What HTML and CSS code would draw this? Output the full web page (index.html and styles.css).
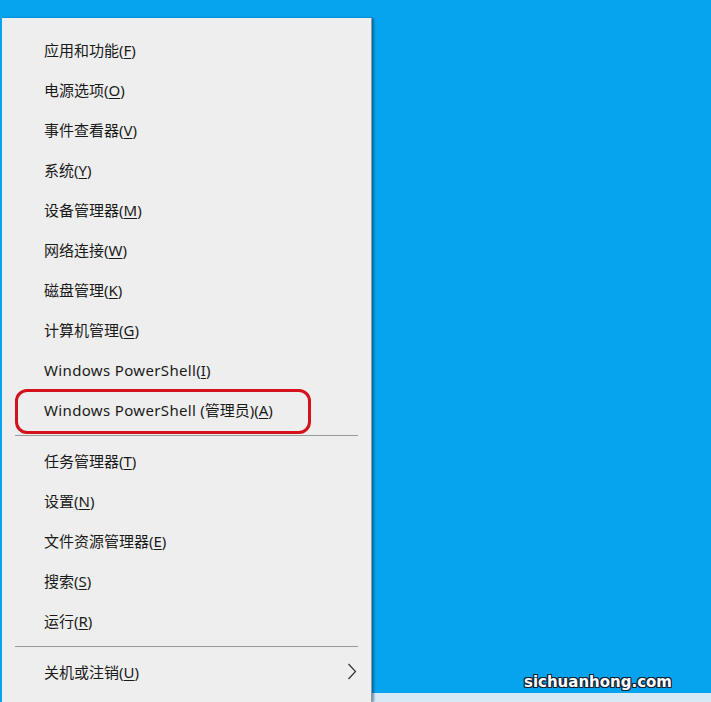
FILE: index.html
```html
<!DOCTYPE html>
<html lang="zh-CN">
<head>
<meta charset="utf-8">
<link rel="stylesheet" href="styles.css">
</head>
<body>
<div class="desktop">
  <div class="menu">
    <div class="item">应用和功能(<u>F</u>)</div>
    <div class="item">电源选项(<u>O</u>)</div>
    <div class="item">事件查看器(<u>V</u>)</div>
    <div class="item">系统(<u>Y</u>)</div>
    <div class="item">设备管理器(<u>M</u>)</div>
    <div class="item">网络连接(<u>W</u>)</div>
    <div class="item">磁盘管理(<u>K</u>)</div>
    <div class="item">计算机管理(<u>G</u>)</div>
    <div class="item"><span class="latin">Windows PowerShell</span>(<u>I</u>)</div>
    <div class="item marked"><span class="latin">Windows PowerShell</span> (管理员)(<u>A</u>)<span class="ring"></span></div>
    <div class="sep"></div>
    <div class="item">任务管理器(<u>T</u>)</div>
    <div class="item">设置(<u>N</u>)</div>
    <div class="item">文件资源管理器(<u>E</u>)</div>
    <div class="item">搜索(<u>S</u>)</div>
    <div class="item">运行(<u>R</u>)</div>
    <div class="sep"></div>
    <div class="item sub">关机或注销(<u>U</u>)
      <svg class="chev" width="10" height="17" viewBox="0 0 10 17"><path d="M1.5 1 L8.5 8.5 L1.5 16" fill="none" stroke="#333" stroke-width="1.2"/></svg>
    </div>
  </div>
  <div class="side">
    <div class="watermark">sichuanhong.com</div>
    <div class="strip"></div>
  </div>
</div>
</body>
</html>
```
FILE: styles.css
```css
html, body {
  margin: 0;
  padding: 0;
  width: 711px;
  height: 702px;
  overflow: hidden;
  background: #06a3ef;
}
.desktop {
  display: flex;
  height: 702px;
  padding-top: 18px;
  padding-left: 2px;
  box-sizing: border-box;
}
.menu {
  width: 370px;
  flex: none;
  background: #eeeeee;
  border-right: 1px solid #8a9aa4;
  box-shadow: 2px 0 2px rgba(0, 40, 80, 0.45);
  padding-top: 12px;
  box-sizing: border-box;
  font-family: "Segoe UI", "Noto Sans", "Noto Sans CJK SC", sans-serif;
  font-size: 15px;
  color: #1a1a1a;
  position: relative;
  z-index: 1;
}
.item {
  height: 40px;
  line-height: 40px;
  padding-left: 42px;
  position: relative;
  white-space: nowrap;
}
.latin {
  letter-spacing: 0.35px;
}
.item u {
  text-decoration-thickness: 1px;
  text-underline-offset: 2px;
}
.ring {
  position: absolute;
  left: 13px;
  top: -1px;
  width: 290px;
  height: 39px;
  border: 3px solid #d3121c;
  border-radius: 12px;
}
.sep {
  height: 1px;
  background: #999999;
  margin: 5px 13px;
}
.sub {
  display: flex;
  align-items: center;
}
.chev {
  position: absolute;
  right: 14px;
  top: 11px;
}
.side {
  flex: 1;
  display: flex;
  flex-direction: column;
  justify-content: flex-end;
  margin-top: -18px;
}
.watermark {
  align-self: flex-end;
  margin-right: 39px;
  margin-bottom: 2px;
  font-family: "DejaVu Sans", "Liberation Sans", sans-serif;
  font-weight: bold;
  font-size: 15px;
  color: #ffffff;
  text-shadow: -1px -1px 0 #123, 1px -1px 0 #123, -1px 1px 0 #123, 1px 1px 0 #123, 0 1px 0 #123, 0 -1px 0 #123, 1px 0 0 #123, -1px 0 0 #123;
}
.strip {
  height: 9px;
  background: #d6e9f4;
}
```
